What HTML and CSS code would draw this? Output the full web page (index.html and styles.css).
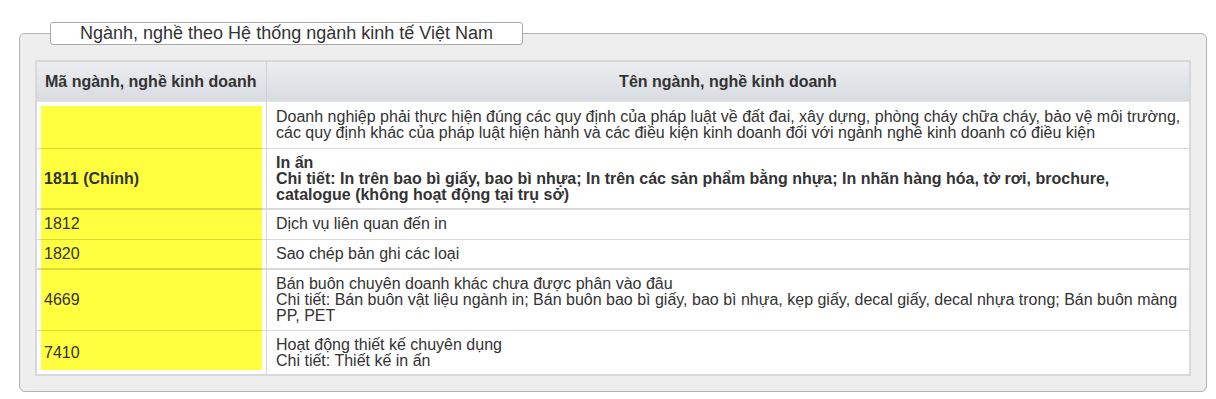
FILE: index.html
```html
<!DOCTYPE html>
<html lang="vi">
<head>
<meta charset="utf-8">
<title>Ngành, nghề kinh doanh</title>
<link rel="stylesheet" href="styles.css">
</head>
<body>
<div class="page">
  <fieldset class="panel">
    <legend class="panel-title">Ngành, nghề theo Hệ thống ngành kinh tế Việt Nam</legend>
    <table class="grid">
      <colgroup>
        <col class="col-code">
        <col>
      </colgroup>
      <thead>
        <tr>
          <th class="h-code">Mã ngành, nghề kinh doanh</th>
          <th class="h-name">Tên ngành, nghề kinh doanh</th>
        </tr>
      </thead>
      <tbody>
        <tr class="first">
          <td class="code"></td>
          <td class="name">Doanh nghiệp phải thực hiện đúng các quy định của pháp luật về đất đai, xây dựng, phòng cháy chữa cháy, bảo vệ môi trường, các quy định khác của pháp luật hiện hành và các điều kiện kinh doanh đối với ngành nghề kinh doanh có điều kiện</td>
        </tr>
        <tr class="main tall thick">
          <td class="code">1811 (Chính)</td>
          <td class="name">In ấn<br>Chi tiết: In trên bao bì giấy, bao bì nhựa; In trên các sản phẩm bằng nhựa; In nhãn hàng hóa, tờ rơi, brochure, catalogue (không hoạt động tại trụ sở)</td>
        </tr>
        <tr>
          <td class="code">1812</td>
          <td class="name">Dịch vụ liên quan đến in</td>
        </tr>
        <tr class="thick">
          <td class="code">1820</td>
          <td class="name">Sao chép bản ghi các loại</td>
        </tr>
        <tr class="tall">
          <td class="code">4669</td>
          <td class="name">Bán buôn chuyên doanh khác chưa được phân vào đâu<br>Chi tiết: Bán buôn vật liệu ngành in; Bán buôn bao bì giấy, bao bì nhựa, kẹp giấy, decal giấy, decal nhựa trong; Bán buôn màng PP, PET</td>
        </tr>
        <tr class="last">
          <td class="code">7410</td>
          <td class="name">Hoạt động thiết kế chuyên dụng<br>Chi tiết: Thiết kế in ấn</td>
        </tr>
      </tbody>
    </table>
  </fieldset>
</div>
</body>
</html>
```
FILE: styles.css
```css
html, body {
  margin: 0;
  padding: 0;
  background: #ffffff;
}

body {
  font-family: "Liberation Sans", Arial, sans-serif;
  color: #333333;
}

.page {
  padding: 22px 9px 0 19px;
}

.panel {
  margin: 0;
  padding: 0 15px 15px 15px;
  border: 1px solid #b4b4b4;
  border-radius: 6px;
  background: #eeeeee;
  min-width: 0;
}

.panel-title {
  margin-left: 15px;
  padding: 0 29px;
  height: 21px;
  line-height: 21px;
  font-size: 18px;
  color: #333333;
  background: #ffffff;
  border: 1px solid #a9a9a9;
  border-radius: 3px;
  box-sizing: content-box;
}

.grid {
  width: 100%;
  margin-top: 15px;
  border-collapse: separate;
  border-spacing: 0;
  table-layout: fixed;
  background: #ffffff;
  border: 2px solid #d8d8d8;
  font-size: 16px;
  line-height: 16px;
}

.col-code {
  width: 230px;
}

.grid th {
  height: 39px;
  padding: 0 8px;
  font-weight: bold;
  font-size: 16px;
  color: #333333;
  background: linear-gradient(#eceef1, #d8dbe0);
  border-bottom: 1px solid #e4e4e4;
  vertical-align: middle;
}

.h-code {
  text-align: left;
  border-right: 1px solid #cfd2d6;
}

.h-name {
  text-align: center;
}

.grid td {
  padding: 6px 5px 7px 9px;
  border-top: 1px solid rgba(0, 0, 0, 0.15);
  vertical-align: middle;
}

.grid tr.first td {
  border-top: 0;
  padding-top: 7px;
}

.grid tr.thick td {
  border-bottom: 1px solid rgba(0, 0, 0, 0.15);
  padding-bottom: 6px;
}

.grid tr.tall td {
  padding-bottom: 6px;
}

.grid tr.tall.thick td {
  padding-bottom: 5px;
}

.grid tr.last td {
  padding-bottom: 5px;
}

.grid td.code {
  padding-left: 7px;
  border-right: 1px solid #d6d6d6;
  background-image: linear-gradient(#ffff40, #ffff40);
  background-repeat: no-repeat;
  background-origin: border-box;
  background-position: 4px 0;
  background-size: calc(100% - 9px) 100%;
}

.grid tr.first td.code {
  background-position: 4px 4px;
  background-size: calc(100% - 9px) calc(100% - 4px);
}

.grid tr.last td.code {
  background-size: calc(100% - 9px) calc(100% - 4px);
}

.grid tr.main td {
  font-weight: bold;
}
```
